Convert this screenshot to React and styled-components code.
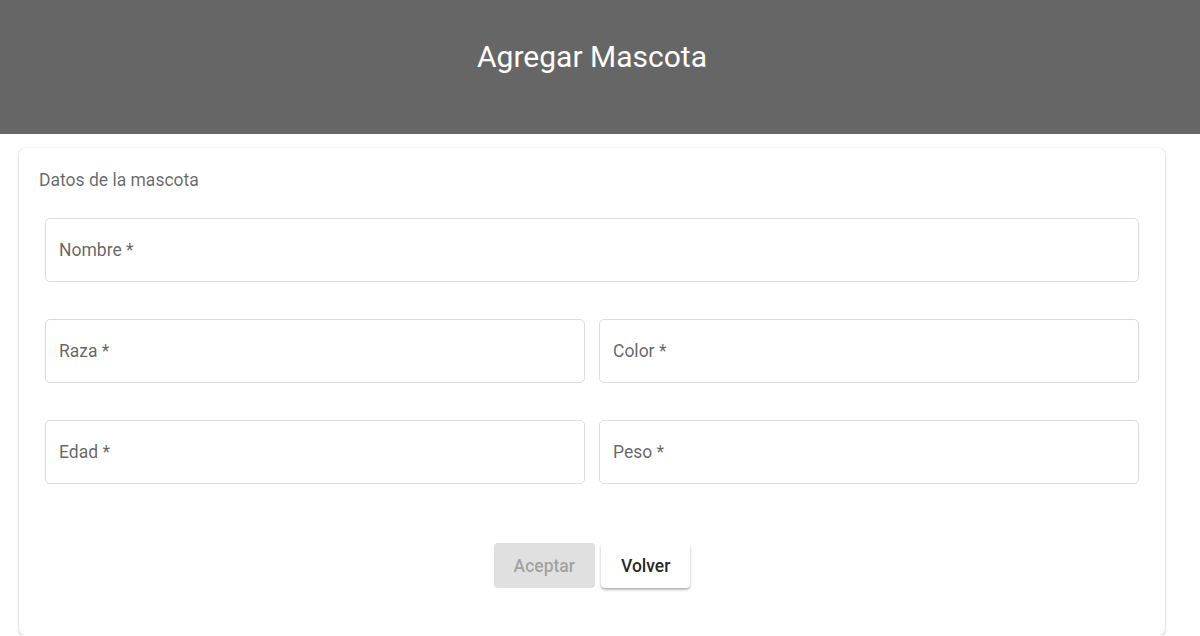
import React from 'react';
import styled, { createGlobalStyle } from 'styled-components';

const GlobalStyle = createGlobalStyle`
  body {
    margin: 0;
    background: #fff;
    font-family: Roboto, "Liberation Sans", Arial, sans-serif;
  }
`;

const Header = styled.header`
  height: 134px;
  background-color: #666666;
  display: flex;
  align-items: center;
  justify-content: center;
  padding-right: 16px;
`;

const Title = styled.h1`
  margin: 0 0 22px;
  color: #fff;
  font-size: 30px;
  font-weight: 400;
`;

const Card = styled.form`
  margin: 14px 35px 0 19px;
  background: #fff;
  border-radius: 6px;
  box-shadow: 0 1px 3px rgba(0, 0, 0, 0.25), 0 0 1px rgba(0, 0, 0, 0.06);
  padding: 20px 26px 47px 20px;
`;

const Subtitle = styled.p`
  margin: 0 0 26px;
  font-size: 17.5px;
  color: rgba(0, 0, 0, 0.6);
  line-height: 24px;
`;

const Fields = styled.div`
  display: grid;
  grid-template-columns: 1fr 1fr;
  column-gap: 14px;
  row-gap: 37px;
  padding-left: 6px;
`;

const Field = styled.label`
  grid-column: ${(p) => (p.full ? '1 / -1' : 'auto')};
  height: 64px;
  box-sizing: border-box;
  border: 1px solid #dcdcdc;
  border-radius: 5px;
  display: flex;
  align-items: center;
  padding: 0 13px;
  font-size: 17.5px;
  color: rgba(0, 0, 0, 0.62);
`;

const Actions = styled.div`
  display: flex;
  justify-content: center;
  gap: 6px;
  margin-top: 59px;
  padding-left: 6px;
`;

const Button = styled.button`
  height: 45px;
  padding: 0 20px;
  border: none;
  border-radius: 4px;
  font-family: inherit;
  font-size: 17.5px;
  font-weight: 500;
  background: ${(p) => (p.primary ? '#e0e0e0' : '#fff')};
  color: ${(p) => (p.primary ? 'rgba(0,0,0,0.3)' : 'rgba(0,0,0,0.87)')};
  box-shadow: ${(p) =>
    p.primary
      ? 'none'
      : '0 2px 3px rgba(0,0,0,0.25), 0 1px 1px rgba(0,0,0,0.1)'};
  cursor: pointer;
`;

function App() {
  return (
    <>
      <GlobalStyle />
      <Header>
        <Title>Agregar Mascota</Title>
      </Header>
      <Card onSubmit={(e) => e.preventDefault()}>
        <Subtitle>Datos de la mascota</Subtitle>
        <Fields>
          <Field full>Nombre *</Field>
          <Field>Raza *</Field>
          <Field>Color *</Field>
          <Field>Edad *</Field>
          <Field>Peso *</Field>
        </Fields>
        <Actions>
          <Button primary type="submit" disabled>
            Aceptar
          </Button>
          <Button type="button">Volver</Button>
        </Actions>
      </Card>
    </>
  );
}

export default App;
